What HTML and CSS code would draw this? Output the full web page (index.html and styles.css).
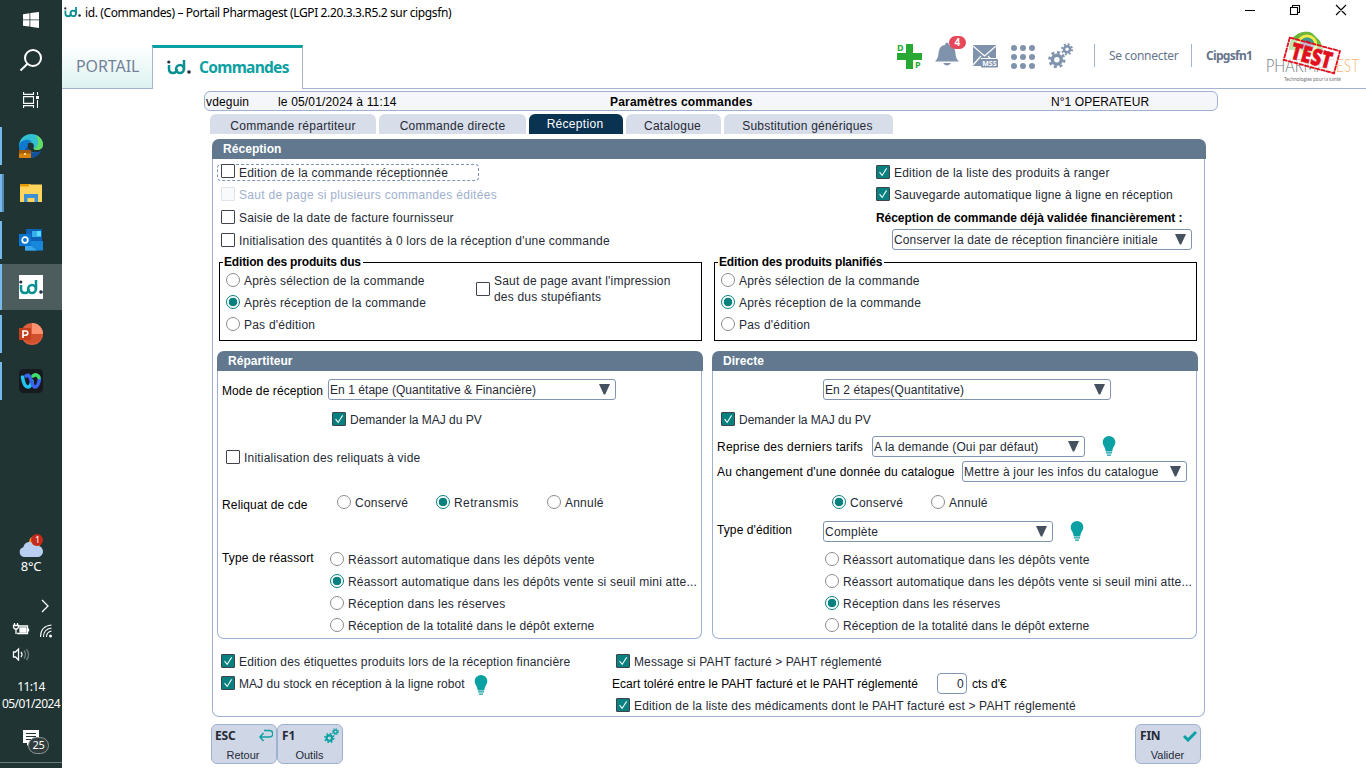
FILE: index.html
```html
<!DOCTYPE html>
<html lang="fr">
<head>
<meta charset="utf-8">
<title>id. (Commandes) – Portail Pharmagest</title>
<link rel="stylesheet" href="styles.css">
</head>
<body>
<svg class="defs" width="0" height="0">
  <defs>
    <symbol id="check" viewBox="0 0 14 14"><path d="M3 7.2 6 11 11.2 2.8" fill="none" stroke="#fff" stroke-width="1.2"/></symbol>
    <symbol id="arrow" viewBox="0 0 10 10"><path d="M0 0h10L5.6 9.500h-1.200z" fill="#465160"/></symbol>
    <symbol id="bulb" viewBox="0 0 14 20"><path d="M7 0a6.300 6.300 0 0 1 6.300 6.300c0 3.500-2.800 4.700-3 9.200H3.700C3.500 11 .7 9.800.7 6.300A6.300 6.300 0 0 1 7 0zM4 16.300h6v1.300H4zM5 18.500h4v1.200H5z" fill="#0ba0a2"/></symbol>
    <symbol id="idlogo" viewBox="0 0 24 16"><g fill="none" stroke="#07908f" stroke-width="2.500"><path d="M2 6v4q0 4 4 4 3.500 0 4-4"/><circle cx="13" cy="10" r="3.900"/><path d="M17 1v9.500"/></g><circle cx="1.800" cy="3" r="1.600" fill="#26303c"/><circle cx="22" cy="13" r="1.800" fill="#26303c"/></symbol>
    <symbol id="gears" viewBox="0 0 24 24"><g fill="none" stroke="currentColor"><circle cx="8.500" cy="16" r="4.300" stroke-width="3.400"/><circle cx="8.500" cy="16" r="7" stroke-width="2.600" stroke-dasharray="2.750 2.750"/><circle cx="18.300" cy="6" r="2.900" stroke-width="2.400"/><circle cx="18.300" cy="6" r="4.800" stroke-width="1.800" stroke-dasharray="1.885 1.885"/></g></symbol>
  </defs>
</svg>

<aside class="taskbar">
  <div class="sys"><svg width="16" height="16" viewBox="0 0 16 16"><path fill="#fff" d="M0 2.200 6.500 1.300v6.200H0zM7.300 1.100 16 0v7.500H7.300zM0 8.300h6.500v6.300L0 13.700zM7.300 8.300H16V16l-8.700-1.200z"/></svg></div>
  <div class="sys"><svg width="24" height="24" viewBox="0 0 24 24" fill="none" stroke="#fff" stroke-width="2"><circle cx="14" cy="10" r="8"/><path d="M8.500 15.800 1.500 22.500"/></svg></div>
  <div class="sys"><svg width="16" height="16" viewBox="0 0 16 16" fill="none" stroke="#fff" stroke-width="1.100"><path d="M.6 0v2.400h9.900V0M.6 16v-2.400h9.900V16M.6 4.600h9.900v6.800H.6zM14.500 0v3M14.500 8v8"/><path d="M13 4h3v3h-3z" fill="#fff" stroke="none"/></svg></div>
  <nav class="apps">
    <div class="app"><svg width="24" height="24" viewBox="0 0 24 24"><path d="M0 12A12 12 0 0 1 12 0c7 0 12 5 12 10.500 0 4-3 5.500-6 5.500-2.500 0-4-1-3.500-2.500C16 10 13 8 9.500 8.500 5 9 1 11 0 16z" fill="#33bfd2"/><path d="M17 1.200c5 2 7 6 7 9.300 0 4-3 5.500-6 5.500-2 0-3-.6-3.400-1.300C20 13 20 7 17 1.200z" fill="#63dc62"/><path d="M0 12c1-6 9-8 13-4.500C9 7 8 11 9 14c1.500 4 8 6 13 3-3 6-9 8-14 6.500C3 22 0 17 0 12z" fill="#0f7ad0"/><path d="M8.800 12c-1 6 5 9 13.200 5-3 6-9 8-13 6.500C5 20 5 15 8.800 12z" fill="#134f9b"/><path d="M0 16h12v8H0z" fill="#d9820c"/><path d="M0 16h12v3.500H0z" fill="#a65a05"/><path d="M5 19h2v2H5z" fill="#ffe08a"/></svg></div>
    <div class="app double"><svg width="24" height="22" viewBox="0 0 24 22"><path d="M1 2h9l2 .5h11V20H1z" fill="#ffd45c"/><path d="M1 2h9v2.500H1z" fill="#e49b08"/><path d="M5 12h14v8h-3.500v-4h-7v4H5z" fill="#3c91d5"/></svg></div>
    <div class="app"><svg width="24" height="22" viewBox="0 0 24 22"><path d="M7 0h16v14H7z" fill="#0c61b6"/><path d="M13 2h9v6h-9z" fill="#35b0e9"/><path d="M18 2h4v5h-4z" fill="#58ddff"/><path d="M6 12h18v9.500H6z" fill="#1687da"/><path d="m6 12 12 9.500H6z" fill="#39a7ea"/><path d="M0 5h12v12H0z" fill="#0877d3"/><circle cx="6" cy="11" r="2.800" fill="none" stroke="#fff" stroke-width="1.700"/></svg></div>
    <div class="app active"><span class="idbox"><svg width="24" height="16"><use href="#idlogo"/></svg></span></div>
    <div class="app"><svg width="24" height="22" viewBox="0 0 24 22"><circle cx="13" cy="11" r="11" fill="#df6040"/><path d="M13 0a11 11 0 0 1 11 11H13z" fill="#ff9270"/><path d="M3 11h21a11 11 0 0 1-21 3z" fill="#d2502e"/><path d="M0 5h12v12H0z" fill="#c43e1c"/><path d="M4 15V8h2.700a2 2 0 0 1 0 4.200H4" fill="none" stroke="#fff" stroke-width="1.600"/></svg></div>
    <div class="app"><svg width="24" height="24" viewBox="0 0 24 24"><rect width="24" height="24" rx="4.500" fill="#171a1c"/><g fill="none" stroke-width="3.600" stroke-linecap="round"><path d="M3.500 8c1 7 3 10 5.500 10 2 0 3-2 4-6" stroke="#21c3f3"/><path d="M7 7c3-2 4 1 5 4s2 7 4 7c3 0 4-5 4.500-8" stroke="#3a64f2"/><path d="M14 7c2-2 5-1 6 1.500" stroke="#3ddc6e"/></g></svg></div>
  </nav>
  <div class="weather">
    <svg width="26" height="26" viewBox="0 0 26 26"><circle cx="17" cy="9" r="6" fill="#ee9322"/><path d="M6 24a5 5 0 0 1-.6-9.800C6.500 8 15 7 17 13c5-1.500 8 2 8 5.500 0 3.500-3 5.500-5.500 5.500z" fill="#b9cff2"/><circle cx="19" cy="7" r="6" fill="#c42b1c"/></svg>
    <span class="wcount">1</span>
    <span class="temp">8°C</span>
  </div>
  <svg class="tray" width="62" height="66" viewBox="0 0 62 66" fill="none" stroke="#fff" stroke-width="1.300"><path d="m42 5 6 6-6 6"/><path d="M18 31h9.500v7.500H17M14.500 28v2M17.500 28v2M13.500 30.500h5v2l-1.500 1.500h-2l-1.500-1.500zM16 34v5M28.500 33.500v3"/><path d="M20 33h6v4h-6z" fill="#fff"/><g stroke-width="1.100"><path d="M40.500 42q0-11 11-12M43.500 42q0-8 8-9M46.500 42q0-5 5-6"/></g><circle cx="50.500" cy="41" r="1.500" fill="#fff" stroke="none"/><path d="M13.500 57h2l3-3v11l-3-3h-2z"/><path d="M21 57q2 2.500 0 5"/><path d="M24 55.500q3 4 0 8M26.500 54q4 6 0 11" stroke="#71807f"/></svg>
  <div class="clock"><span>11:14</span><span>05/01/2024</span></div>
  <div class="notif"><svg width="16" height="16" viewBox="0 0 16 16"><path d="M0 0h16v13H7l-3 3v-3H0z" fill="#fff"/><path d="M3 3.500h10M3 6.500h10M3 9.500h7" stroke="#1f3433"/></svg><span class="ncount">25</span></div>
  <div class="edge"></div>
</aside>

<main class="window">
  <div class="titlebar">
    <svg width="17" height="12"><use href="#idlogo"/></svg>
    <span class="wtitle">id. (Commandes) – Portail Pharmagest (LGPI 2.20.3.3.R5.2 sur cipgsfn)</span>
    <svg class="wctl" width="104" height="12" viewBox="0 0 104 12" fill="none" stroke="#000" stroke-width="1.100"><path d="M0 6.500h10M45.500 3.500h7v7h-7zM47.500 3.500v-2h7v7h-2M91 1l10 10M101 1 91 11"/></svg>
  </div>
  <header class="header">
    <div class="tab portail">PORTAIL</div>
    <div class="tab commandes"><svg width="24" height="16"><use href="#idlogo"/></svg><span>Commandes</span></div>
    <div class="tools">
      <div class="dp"><svg width="26" height="26" viewBox="0 0 26 26"><path d="M9 0h7v9h9v7h-9v9H9v-9H0V9h9z" fill="#27a933"/></svg><b class="d">D</b><b class="p">P</b></div>
      <span class="bell"><svg width="24" height="24" viewBox="0 0 24 24" fill="#8093ad"><path d="M0 19.500c4-4 3-7 4-11Q5 3.500 10 3q0-2.500 2-2.500T14 3q5 .5 6 5.500c1 4 0 7 4 11zM8 21h8q-4 5-8 0z"/></svg><b class="badge">4</b></span>
      <svg class="mail" width="25" height="23" viewBox="0 0 25 23"><path d="M0 0h23v13H8v8H0z" fill="#8093ad"/><path d="m0 1 11.500 10L23 1M0 20l8-9M23 20l-8-9" stroke="#fff" stroke-width="1.200" fill="none"/><rect x="8" y="14" width="17" height="8.500" rx="1" fill="#8093ad"/><text x="9.200" y="21">MSS</text></svg>
      <svg class="grid" width="24" height="24" viewBox="0 0 24 24" fill="#8093ad"><circle cx="3" cy="3" r="3"/><circle cx="12" cy="3" r="3"/><circle cx="21" cy="3" r="3"/><circle cx="3" cy="12" r="3"/><circle cx="12" cy="12" r="3"/><circle cx="21" cy="12" r="3"/><circle cx="3" cy="21" r="3"/><circle cx="12" cy="21" r="3"/><circle cx="21" cy="21" r="3"/></svg>
      <svg class="gear" width="25" height="25"><use href="#gears"/></svg>
      <span class="sep"></span><span class="login">Se connecter</span><span class="sep two"></span><b class="user">Cipgsfn1</b>
      <svg class="brand" width="100" height="56" viewBox="0 0 100 56"><path d="M23 26C22 10 39 5 46 9l8 8 4 10z" fill="#6ab63d"/><g fill="none" stroke-width="3"><circle cx="41" cy="21" r="9" stroke="#f2e94b"/><circle cx="41" cy="21" r="6" stroke="#3d9a91"/></g><circle cx="41" cy="21" r="4.500" fill="#65468b"/><text class="ph" x="0" y="48" textLength="60" lengthAdjust="spacingAndGlyphs">PHARMA</text><text class="ph orange" x="60" y="48" textLength="33" lengthAdjust="spacingAndGlyphs">GEST</text><text class="tag" x="18" y="57" textLength="57">Technologies pour la santé</text><g transform="rotate(15 46 31)"><rect x="20" y="20" width="52" height="23" fill="#fff" fill-opacity=".6" stroke="#e0101c" stroke-width="1.800" stroke-dasharray="5 .6"/><text class="test" x="25" y="40" textLength="42" lengthAdjust="spacingAndGlyphs">TEST</text></g></svg>
    </div>
  </header>

  <div class="content">
    <div class="infobar"><span class="who">vdeguin</span><span class="when">le 05/01/2024 à 11:14</span><b class="what">Paramètres commandes</b><span class="oper">N°1 OPERATEUR</span></div>
    <nav class="tabs"><span class="t1">Commande répartiteur</span><span class="t2">Commande directe</span><span class="t3 on">Réception</span><span class="t4">Catalogue</span><span class="t5">Substitution génériques</span></nav>

    <section class="panel main">
      <h2>Réception</h2>
      <div class="body">
        <div class="top">
          <div class="left">
            <label class="row r22"><span class="focus"><i class="cb"></i><span>Edition de la commande réceptionnée</span></span></label>
            <label class="row r22 off"><i class="cb"></i>Saut de page si plusieurs commandes éditées</label>
            <label class="row r23 ls17"><i class="cb"></i>Saisie de la date de facture fournisseur</label>
            <label class="row r23 ls20"><i class="cb"></i>Initialisation des quantités à 0 lors de la réception d'une commande</label>
          </div>
          <div class="right">
            <label class="row r22 ls20"><i class="cb on"><svg><use href="#check"/></svg></i>Edition de la liste des produits à ranger</label>
            <label class="row r22 ls17"><i class="cb on"><svg><use href="#check"/></svg></i>Sauvegarde automatique ligne à ligne en réception</label>
            <div class="row r23 strong">Réception de commande déjà validée financièrement :</div>
            <div class="row r23 ls13"><div class="select s-date">Conserver la date de réception financière initiale<svg><use href="#arrow"/></svg></div></div>
          </div>
        </div>

        <div class="sets">
          <fieldset><legend>Edition des produits dus</legend>
            <div class="radios">
              <label class="row r22"><i class="rb"></i>Après sélection de la commande</label>
              <label class="row r22 ls20"><i class="rb on"></i>Après réception de la commande</label>
              <label class="row r22"><i class="rb"></i>Pas d'édition</label>
            </div>
            <label class="stup ls20"><i class="cb"></i><span>Saut de page avant l'impression<br>des dus stupéfiants</span></label>
          </fieldset>
          <fieldset><legend>Edition des produits planifiés</legend>
            <div class="radios">
              <label class="row r22"><i class="rb"></i>Après sélection de la commande</label>
              <label class="row r22 ls20"><i class="rb on"></i>Après réception de la commande</label>
              <label class="row r22"><i class="rb"></i>Pas d'édition</label>
            </div>
          </fieldset>
        </div>

        <div class="subs">
          <section class="panel sub">
            <h2>Répartiteur</h2>
            <div class="body">
              <div class="row mode ls05"><span class="lab l-mode">Mode de réception</span><div class="select s-mode">En 1 étape (Quantitative &amp; Financière)<svg><use href="#arrow"/></svg></div></div>
              <label class="row maj in ls00"><i class="cb on"><svg><use href="#check"/></svg></i>Demander la MAJ du PV</label>
              <label class="row vide ls20"><i class="cb"></i>Initialisation des reliquats à vide</label>
              <div class="row reliq"><span class="lab l-rel">Reliquat de cde</span><label class="o1"><i class="rb"></i>Conservé</label><label class="o2 ls40"><i class="rb on"></i>Retransmis</label><label><i class="rb"></i>Annulé</label></div>
              <div class="types"><span class="lab l-type">Type de réassort</span>
                <div>
                  <label class="row r22"><i class="rb"></i>Réassort automatique dans les dépôts vente</label>
                  <label class="row r22 ls20"><i class="rb on"></i>Réassort automatique dans les dépôts vente si seuil mini atte...</label>
                  <label class="row r22"><i class="rb"></i>Réception dans les réserves</label>
                  <label class="row r22 ls10"><i class="rb"></i>Réception de la totalité dans le dépôt externe</label>
                </div>
              </div>
            </div>
          </section>
          <section class="panel sub">
            <h2>Directe</h2>
            <div class="body">
              <div class="row mode ls10"><span class="lab l-mode"></span><div class="select s-mode">En 2 étapes(Quantitative)<svg><use href="#arrow"/></svg></div></div>
              <label class="row maj ls00"><i class="cb on"><svg><use href="#check"/></svg></i>Demander la MAJ du PV</label>
              <div class="row tarif ls10"><span class="lab l-tarif">Reprise des derniers tarifs</span><div class="select s-tarif">A la demande (Oui par défaut)<svg><use href="#arrow"/></svg></div><svg class="bulb"><use href="#bulb"/></svg></div>
              <div class="row catal ls10"><span class="lab l-cat">Au changement d'une donnée du catalogue</span><div class="select s-cat">Mettre à jour les infos du catalogue<svg><use href="#arrow"/></svg></div></div>
              <div class="row reliq d"><label class="o1"><i class="rb on"></i>Conservé</label><label><i class="rb"></i>Annulé</label></div>
              <div class="row edit"><span class="lab l-mode">Type d'édition</span><div class="select s-edit">Complète<svg><use href="#arrow"/></svg></div><svg class="bulb"><use href="#bulb"/></svg></div>
              <div class="types d">
                <div>
                  <label class="row r22"><i class="rb"></i>Réassort automatique dans les dépôts vente</label>
                  <label class="row r22 ls20"><i class="rb"></i>Réassort automatique dans les dépôts vente si seuil mini atte...</label>
                  <label class="row r22"><i class="rb on"></i>Réception dans les réserves</label>
                  <label class="row r22 ls10"><i class="rb"></i>Réception de la totalité dans le dépôt externe</label>
                </div>
              </div>
            </div>
          </section>
        </div>

        <div class="bottom">
          <div class="bl">
            <label class="row r22 ls17"><i class="cb on"><svg><use href="#check"/></svg></i>Edition des étiquettes produits lors de la réception financière</label>
            <div class="row r22 ls05"><label class="inl"><i class="cb on"><svg><use href="#check"/></svg></i>MAJ du stock en réception à la ligne robot</label><svg class="bulb near"><use href="#bulb"/></svg></div>
          </div>
          <div class="br">
            <label class="row r22 ind ls10"><i class="cb on"><svg><use href="#check"/></svg></i>Message si PAHT facturé &gt; PAHT réglementé</label>
            <div class="row r22 ecart"><span class="lab l-ecart">Ecart toléré entre le PAHT facturé et le PAHT réglementé</span><span class="num">0</span><span class="lab cts">cts d'€</span></div>
            <label class="row r22 ind ls17"><i class="cb on"><svg><use href="#check"/></svg></i>Edition de la liste des médicaments dont le PAHT facturé est &gt; PAHT réglementé</label>
          </div>
        </div>
      </div>
    </section>

    <footer class="keys">
      <div class="key"><div><b>ESC</b><svg width="14" height="13" viewBox="0 0 14 13" fill="none" stroke="#0ba0a2" stroke-width="1.500"><path d="M5 1.500h5.500a2.800 2.800 0 0 1 0 6.500H1M4.500 4 1 8l3.500 4"/></svg></div><span>Retour</span></div>
      <div class="key"><div><b>F1</b><svg class="kg" width="15" height="15"><use href="#gears"/></svg></div><span>Outils</span></div>
      <div class="key last"><div><b>FIN</b><svg width="14" height="12" viewBox="0 0 14 12" fill="none" stroke="#0ba0a2" stroke-width="3"><path d="m1 6 4 4 8-8"/></svg></div><span>Valider</span></div>
    </footer>
  </div>
</main>
</body>
</html>
```

FILE: styles.css
```css
* { box-sizing: border-box; }
body { margin: 0; width: 1366px; height: 768px; overflow: hidden; display: flex; background: #fff; font: 12px "Liberation Sans", Arial, sans-serif; letter-spacing: .22px; color: #262a35; white-space: nowrap; }
svg { display: block; flex: none; }
.defs { position: absolute; }
i { font-style: normal; }

/* Tracking steps */
.ls00 { letter-spacing: -.02px; }
.ls05 { letter-spacing: .05px; }
.ls10 { letter-spacing: .12px; }
.ls13 { letter-spacing: .14px; }
.ls17 { letter-spacing: .165px; }
.ls20 { letter-spacing: .2px; }
.ls40 { letter-spacing: .4px; }

/* Taskbar */
.taskbar { width: 62px; flex: none; background: #1f3433; display: flex; flex-direction: column; color: #fff; font-family: "Noto Sans", sans-serif; letter-spacing: -.3px; }
.sys { height: 40px; display: flex; align-items: center; justify-content: center; }
.apps { margin-top: 3px; display: flex; flex-direction: column; gap: 1px; }
.app { height: 46px; display: flex; align-items: center; justify-content: center; background: linear-gradient(#76b9ed, #76b9ed) 0 4px / 2px 38px no-repeat; }
.app.double { background: linear-gradient(90deg, #76b9ed 50%, #5688b3 50%) 0 4px / 4px 38px no-repeat; }
.app.active { background: linear-gradient(#76b9ed, #76b9ed) 0 0 / 2px 46px no-repeat, #4d5c5c; }
.idbox { width: 24px; height: 24px; background: #fff; display: flex; align-items: center; }
.weather { margin-top: 129px; height: 42px; display: flex; flex-direction: column; align-items: center; position: relative; }
.wcount { position: absolute; left: 35px; top: 1px; font-size: 9px; line-height: 12px; }
.temp { font-size: 13px; line-height: 16px; margin-top: -1px; }
.tray { margin-top: 20px; }
.clock { margin-top: 17px; display: flex; flex-direction: column; align-items: center; font-size: 12px; line-height: 17px; letter-spacing: -.6px; }
.notif { position: relative; margin: 18px 0 0 23px; }
.ncount { position: absolute; left: 5px; top: 7px; width: 21px; height: 17px; border: 1px solid #8c9695; border-radius: 9px; background: #303d3c; font-size: 11px; line-height: 14px; text-align: center; }
.edge { height: 1px; margin-top: 16px; background: #6b7b7a; }

/* Window chrome */
.window { width: 1304px; flex: none; display: flex; flex-direction: column; }
.titlebar { height: 24px; display: flex; align-items: center; padding-left: 2px; font: 12px "Noto Sans", sans-serif; letter-spacing: -.38px; color: #000; }
.wtitle { margin-left: 4px; }
.wctl { margin: -4px 17px 0 auto; }
.header { height: 65px; display: flex; align-items: flex-end; background: linear-gradient(#a3b4d0, #a3b4d0) 0 64px / 100% 1px no-repeat; font-family: "Noto Sans", sans-serif; }
.tab { display: flex; align-items: center; }
.portail { width: 90px; height: 43px; margin-bottom: 1px; padding: 0 0 2px 14px; font-size: 16px; letter-spacing: -.1px; color: #748298; background: linear-gradient(#fff, #dcf2f0); }
.commandes { width: 151px; height: 44px; padding: 0 0 4px 14px; border: solid #a3b4d0; border-width: 3px 1px 0; border-top-color: #0ba0a2; background: #fff; color: #0ba0a2; font-size: 15.500px; font-weight: bold; letter-spacing: -.7px; }
.commandes span { margin-left: 8px; }
.tools { margin-left: 594px; height: 65px; display: flex; align-items: flex-start; }
.dp { margin-top: 20px; position: relative; color: #27a933; font-size: 9px; line-height: 10px; }
.dp .d { position: absolute; left: 0; top: -1px; }
.dp .p { position: absolute; left: 18px; top: 16px; }
.bell { position: relative; margin: 18px 0 0 12px; }
.badge { position: absolute; left: 14px; top: -6px; width: 17px; height: 13px; border-radius: 7px; background: #e64759; color: #fff; font-size: 10px; line-height: 13px; text-align: center; }
.mail { margin: 21px 0 0 14px; }
.mail text { font: bold 7px "Noto Sans"; fill: #fff; letter-spacing: 0; }
.grid { margin: 21px 0 0 13px; }
.gear { margin: 19px 0 0 13px; color: #8093ad; }
.sep { width: 1px; height: 23px; background: #a3b4d0; margin: 20px 0 0 21px; }
.sep.two { margin-left: 13px; }
.login, .user { margin: 22px 0 0 14px; font-size: 12px; line-height: 20px; color: #66758c; letter-spacing: -.3px; width: 69px; }
.user { width: 47px; letter-spacing: -.7px; }
.brand { margin: 0 0 0 13px; overflow: visible; }
.ph { font: 300 17px Lato, sans-serif; fill: #70747a; letter-spacing: 0; }
.ph.orange { fill: #f2b56d; }
.tag { font: 5px Lato, sans-serif; fill: #777; }
.test { font: 900 23px "Noto Sans"; fill: #e0101c; stroke: #e0101c; stroke-width: .6px; }

/* Content */
.content { padding-left: 142px; }
.infobar { margin-top: 2px; width: 1014px; height: 20px; border: 1px solid #9fb1d2; border-radius: 6px; background: #f5f6fa; color: #000; display: flex; align-items: center; padding: 2px 0 0 1px; letter-spacing: .16px; }
.who { width: 72px; }
.when { width: 332px; }
.what { width: 441px; letter-spacing: .2px; }
.oper { letter-spacing: .07px; }
.tabs { margin: 3px 0 0 6px; display: flex; gap: 3px; }
.tabs span { height: 20px; line-height: 24px; border-radius: 6px 6px 0 0; background: #d7dde9; text-align: center; }
.tabs .t1 { width: 166px; letter-spacing: .27px; }
.tabs .t2 { width: 147px; letter-spacing: .27px; }
.tabs .t3 { width: 94px; background: #0a3251; color: #fff; line-height: 20px; letter-spacing: .3px; padding-right: 2px; }
.tabs .t4 { width: 95px; letter-spacing: .25px; padding-right: 2px; }
.tabs .t5 { width: 169px; letter-spacing: .22px; padding-right: 2px; }
.panel h2 { margin: 0 -1px 0 0; height: 20px; border-radius: 7px 7px 0 0; background: #61788f; color: #fff; font-size: 12px; line-height: 21px; padding-left: 11px; letter-spacing: .05px; }
.panel .body { border: 1px solid #9fb1d2; border-top: 0; border-radius: 0 0 7px 7px; }
.panel.main { margin: 5px 0 0 8px; width: 993px; }
.main > .body { height: 558px; }
.row { display: flex; align-items: center; }
label.row:not(.maj), .inl, .reliq label { padding-top: 2px; }
label.row:not(.maj) .cb, label.row .rb, .inl .cb, .reliq .rb { margin-bottom: 2px; }
.r22 { height: 22px; }
.r23 { height: 23px; }
.cb { width: 14px; height: 14px; border: 1px solid #41434a; border-radius: 1px; margin-right: 4px; flex: none; background: #fff; }
.cb.on { background: #07817f; }
.cb svg { width: 12px; height: 12px; }
.maj .cb { margin-bottom: 1px; }
.rb { width: 14px; height: 14px; border: 1px solid #8a8c8f; border-radius: 50%; margin-right: 4px; flex: none; }
.rb.on { border-color: #07817f; background: radial-gradient(circle, #07817f 4px, #fff 4.600px); }
.off { color: #a0b0cf; letter-spacing: .29px; }
.off .cb { border-color: #dfe3ea; background: #f9fafc; }
.top { display: flex; padding: 2px 0 0 8px; height: 95px; }
.left { width: 655px; }
.focus { display: flex; align-items: center; width: 262px; height: 17px; margin: -2px 0 0 -4px; padding-left: 3px; border: 1px dashed #7e92b5; border-radius: 4px; }
.focus > span { padding-top: 2px; }
.row .focus .cb { margin-bottom: 0; }
.strong { font-weight: bold; color: #000; letter-spacing: -.06px; padding-top: 2px; }
.select { height: 21px; border: 1px solid #8194b2; border-radius: 3px; display: flex; align-items: center; padding-left: 1px; background: #fff; }
.select svg { width: 11px; height: 11px; margin: 0 5px 0 auto; }
.s-date { width: 300px; margin-left: 16px; }
.sets { display: flex; gap: 12px; padding-left: 6px; margin-top: 1px; }
fieldset { margin: 0; padding: 0; width: 483px; height: 86px; border: 1px solid #000; display: flex; min-width: 0; position: relative; }
legend { margin-left: 3px; padding: 0 2px 0 1px; font-weight: bold; color: #000; line-height: 14px; letter-spacing: -.16px; }
.radios { padding-left: 6px; width: 256px; }
.stup { display: flex; align-items: center; height: 32px; line-height: 16px; margin-top: 4px; }
.subs { display: flex; gap: 10px; padding-left: 4px; margin-top: 10px; }
.sub { width: 485px; }
.sub > .body { height: 268px; }
.lab { color: #000; letter-spacing: .15px; }
.sub .row > .lab, .types > .lab { padding-left: 4px; }
.mode { height: 37px; }
.mode .lab { padding-top: 2px; letter-spacing: .1px; }
.l-mode { width: 110px; }
.s-mode { width: 288px; }
.maj { height: 23px; padding-left: 8px; }
.maj.in { padding-left: 114px; }
.vide { height: 22px; margin-top: 15px; padding-left: 8px; }
.reliq { height: 22px; margin-top: 23px; }
.reliq label { display: flex; align-items: center; }
.reliq .lab { padding-top: 5px; width: 119px; }
.reliq .o1 { width: 99px; }
.reliq .o2 { width: 111px; }
.types { display: flex; margin-top: 35px; }
.types .lab { width: 112px; line-height: 20px; }
.tarif { height: 21px; margin-top: 5px; }
.l-tarif { width: 159px; letter-spacing: .22px; }
.s-tarif { width: 213px; }
.bulb { width: 14px; height: 20px; margin: -1px 0 0 17px; }
.bulb.near { margin: 3px 0 0 9px; }
.catal { height: 21px; margin-top: 4px; }
.l-cat { width: 249px; }
.s-cat { width: 225px; letter-spacing: .22px; padding-right: 0; }
.reliq.d { margin-top: 9px; padding-left: 119px; }
.edit { height: 21px; margin-top: 8px; }
.edit .lab { padding-bottom: 3px; letter-spacing: .1px; }
.s-edit { width: 230px; }
.types.d { margin-top: 6px; padding-left: 112px; }
.bottom { display: flex; padding: 11px 0 0 8px; }
.bl { width: 391px; }
.inl { display: flex; align-items: center; }
.ind { padding-left: 4px; }
.ecart .lab { padding-top: 1px; letter-spacing: .06px; }
.l-ecart { width: 325px; }
.num { width: 30px; height: 21px; border: 1px solid #8194b2; border-radius: 4px; text-align: right; padding-right: 2px; line-height: 21px; }
.cts { margin-left: 5px; }
.keys { display: flex; padding-left: 7px; margin-top: 7px; width: 998px; }
.key { width: 66px; height: 40px; border: 1px solid #9fb1d2; border-radius: 6px; background: #cfd7e7; padding: 2px 3px 0; text-align: center; font-size: 11px; letter-spacing: 0; }
.key.last, .key + .key { padding-left: 4px; }
.key div { display: flex; align-items: center; justify-content: space-between; height: 17px; font: 12px "Noto Sans", sans-serif; letter-spacing: -.2px; }
.key span { display: block; line-height: 19px; margin: 2px 2px 0 0; }
.kg { color: #0ba0a2; }
.key.last { margin-left: auto; margin-right: 1px; }
```
